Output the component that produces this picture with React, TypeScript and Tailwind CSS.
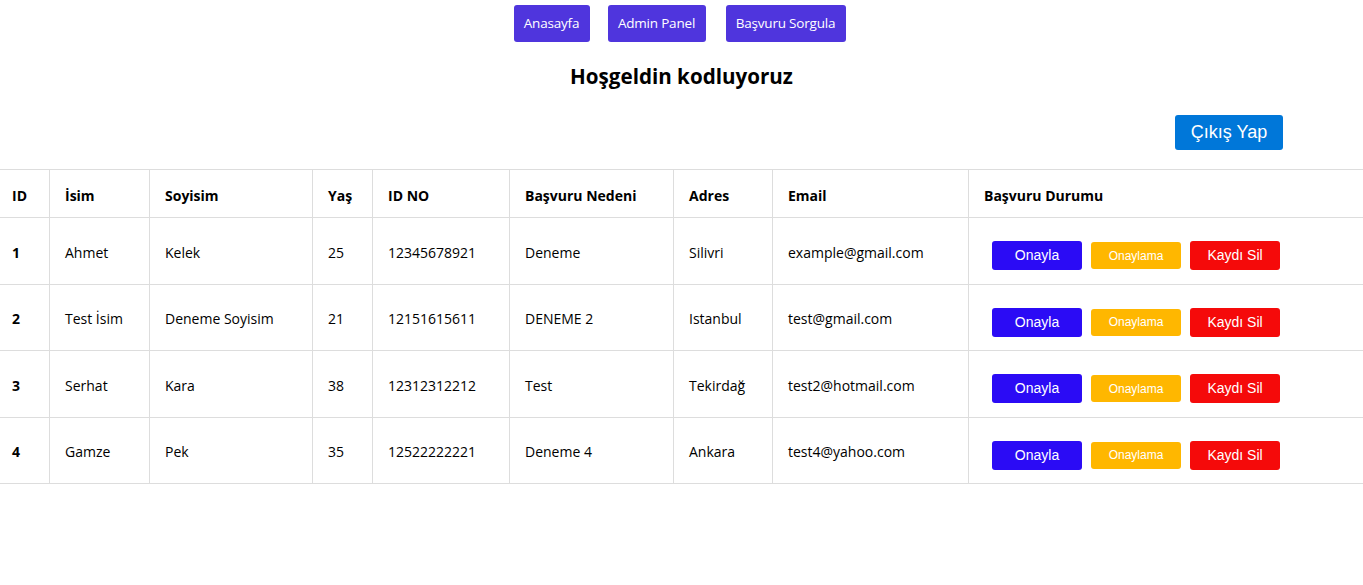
import React from "react";

const rows = [
  { id: 1, isim: "Ahmet", soyisim: "Kelek", yas: 25, idno: "12345678921", neden: "Deneme", adres: "Silivri", email: "example@gmail.com" },
  { id: 2, isim: "Test İsim", soyisim: "Deneme Soyisim", yas: 21, idno: "12151615611", neden: "DENEME 2", adres: "Istanbul", email: "test@gmail.com" },
  { id: 3, isim: "Serhat", soyisim: "Kara", yas: 38, idno: "12312312212", neden: "Test", adres: "Tekirdağ", email: "test2@hotmail.com" },
  { id: 4, isim: "Gamze", soyisim: "Pek", yas: 35, idno: "12522222221", neden: "Deneme 4", adres: "Ankara", email: "test4@yahoo.com" },
];

const font = "font-['Open_Sans','Noto_Sans',sans-serif]";
const arial = "font-['Liberation_Sans',Arial,sans-serif]";

export default function App() {
  const th = "border border-[#ddd] px-[15px] pt-[4px] text-left font-bold text-[14px] text-black";
  const td = "border border-[#ddd] px-[15px] pt-[3px] text-[14px] text-black";
  return (
    <div className={`${font} w-[1363px] h-[585px] bg-white text-black overflow-hidden`}>
      <div className="flex justify-center pt-[5px] pr-[4px]">
        <button className="w-[76px] h-[37px] rounded-[3px] bg-[#4f35dd] text-white text-[13.5px] tracking-[-0.2px]">Anasayfa</button>
        <button className="ml-[18px] w-[98px] h-[37px] rounded-[3px] bg-[#4f35dd] text-white text-[13.5px] tracking-[-0.2px]">Admin Panel</button>
        <button className="ml-[20px] w-[120px] h-[37px] rounded-[3px] bg-[#4f35dd] text-white text-[13.5px] tracking-[-0.2px]">Başvuru Sorgula</button>
      </div>
      <h1 className="mt-[20px] text-center text-[20.6px] font-bold leading-[28px]">Hoşgeldin kodluyoruz</h1>
      <div className="flex justify-end pr-[80px] mt-[25px]">
        <button className={`${arial} w-[108px] h-[35px] rounded-[3px] bg-[#0077d9] text-white text-[18px]`}>Çıkış Yap</button>
      </div>
      <table className="mt-[19px] ml-[-4px] border-collapse table-fixed w-[1367px]">
        <colgroup>
          <col className="w-[53px]" />
          <col className="w-[100px]" />
          <col className="w-[163px]" />
          <col className="w-[60px]" />
          <col className="w-[137px]" />
          <col className="w-[164px]" />
          <col className="w-[99px]" />
          <col className="w-[196px]" />
          <col className="w-[395px]" />
        </colgroup>
        <thead>
          <tr className="h-[48px]">
            <th className={th}>ID</th>
            <th className={th}>İsim</th>
            <th className={th}>Soyisim</th>
            <th className={th}>Yaş</th>
            <th className={th}>ID NO</th>
            <th className={th}>Başvuru Nedeni</th>
            <th className={th}>Adres</th>
            <th className={th}>Email</th>
            <th className={th}>Başvuru Durumu</th>
          </tr>
        </thead>
        <tbody>
          {rows.map((r) => (
            <tr key={r.id} className="h-[66.5px]">
              <td className={`${td} font-bold`}>{r.id}</td>
              <td className={td}>{r.isim}</td>
              <td className={td}>{r.soyisim}</td>
              <td className={td}>{r.yas}</td>
              <td className={td}>{r.idno}</td>
              <td className={td}>{r.neden}</td>
              <td className={td}>{r.adres}</td>
              <td className={td}>{r.email}</td>
              <td className="border border-[#ddd] pl-[23px] pr-[15px]">
                <div className={`${arial} flex items-center gap-[9px] mt-[10px]`}>
                  <button className="w-[90px] h-[29px] rounded-[3px] bg-[#2b0bf5] text-white text-[14px]">Onayla</button>
                  <button className="w-[90px] h-[27px] rounded-[3px] bg-[#ffb700] text-white text-[12px]">Onaylama</button>
                  <button className="w-[90px] h-[29px] rounded-[3px] bg-[#f50a0a] text-white text-[14px]">Kaydı Sil</button>
                </div>
              </td>
            </tr>
          ))}
        </tbody>
      </table>
    </div>
  );
}
